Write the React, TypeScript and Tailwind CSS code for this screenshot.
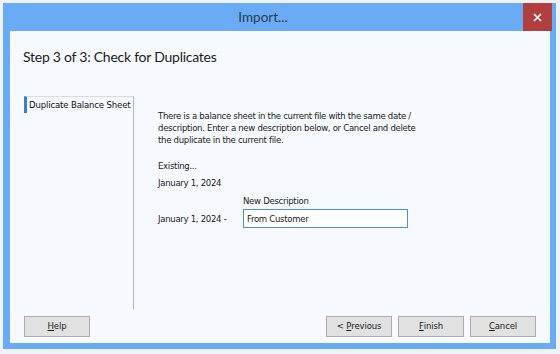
import React from "react"

const body = { fontFamily: '"DejaVu Sans Condensed", "DejaVu Sans", sans-serif' }
const ui = { fontFamily: 'Lato, "Open Sans", sans-serif' }

function Btn({ label, u, rest }: { label?: string; u: string; rest: string }) {
  return (
    <button
      type="button"
      className="w-[66px] h-[21px] bg-[#e1e1e1] border border-[#adadad] text-[9.5px] tracking-[-0.15px] text-[#1a1a1a] flex items-center justify-center whitespace-pre"
      style={body}
    >
      {label}
      <span className="underline">{u}</span>
      {rest}
    </button>
  )
}

export default function App() {
  return (
    <div className="w-[560px] h-[354px] bg-[#eef3f9] pt-[3px] pl-[3px]">
      <div className="w-[553px] h-[346px] bg-[#6aabf6] flex flex-col">
        <div className="h-[28px] flex items-stretch">
          <div className="flex-1 flex items-center justify-center text-[13.5px] text-[#2b3a4f]" style={ui}>
            Import...
          </div>
          <div className="w-[29px] mr-[4px] bg-[#b13f3f] flex items-center justify-center">
            <svg width="9" height="9" viewBox="0 0 9 9">
              <path d="M1 1L8 8M8 1L1 8" stroke="#ffffff" strokeWidth="1.6" />
            </svg>
          </div>
        </div>
        <div className="ml-[7px] mr-[6px] mb-[6px] flex-1 bg-[#f6faff] flex flex-col">
          <div className="pl-[13px] pt-[15px] h-[55px] text-[14px] tracking-[-0.25px] text-[#1b1b1b]" style={ui}>
            Step 3 of 3: Check for Duplicates
          </div>
          <div className="flex flex-1 pl-[14px] pt-[10px]">
            <div className="w-[110px] flex flex-col">
              <div
                className="h-[17px] border-t border-[#d8dde3] border-l-[3px] border-l-[#3a7cd8] pl-[2px] text-[9.5px] tracking-[-0.15px] text-[#111] leading-[16px] whitespace-nowrap"
                style={body}
              >
                Duplicate Balance Sheet
              </div>
              <div className="flex-1 mb-[3px] self-end w-px bg-[#b4b8be] -mt-[17px]" />
            </div>
            <div
              className="flex flex-col pl-[24px] pt-[14px] text-[9.5px] tracking-[-0.3px] text-[#1b1b1b] leading-[12px] whitespace-nowrap"
              style={body}
            >
              <p>
                There is a balance sheet in the current file with the same date /
                <br />
                description. Enter a new description below, or Cancel and delete
                <br />
                the duplicate in the current file.
              </p>
              <p className="mt-[14px]">Existing...</p>
              <p className="mt-[5px]">January 1, 2024</p>
              <div className="mt-[6px] flex flex-col">
                <div className="pl-[85px]">New Description</div>
                <div className="flex items-center mt-[2px]">
                  <span className="w-[85px]">January 1, 2024 -</span>
                  <div className="w-[165px] h-[19px] border border-[#4f8fd6] bg-white flex items-center pl-[3px]">
                    From Customer
                  </div>
                </div>
              </div>
            </div>
          </div>
          <div className="flex items-center h-[31px] pb-[3px] px-[14px]">
            <Btn u="H" rest="elp" />
            <div className="flex-1" />
            <div className="flex gap-[6px]">
              <Btn label="< " u="P" rest="revious" />
              <Btn u="F" rest="inish" />
              <Btn u="C" rest="ancel" />
            </div>
          </div>
        </div>
      </div>
    </div>
  )
}
